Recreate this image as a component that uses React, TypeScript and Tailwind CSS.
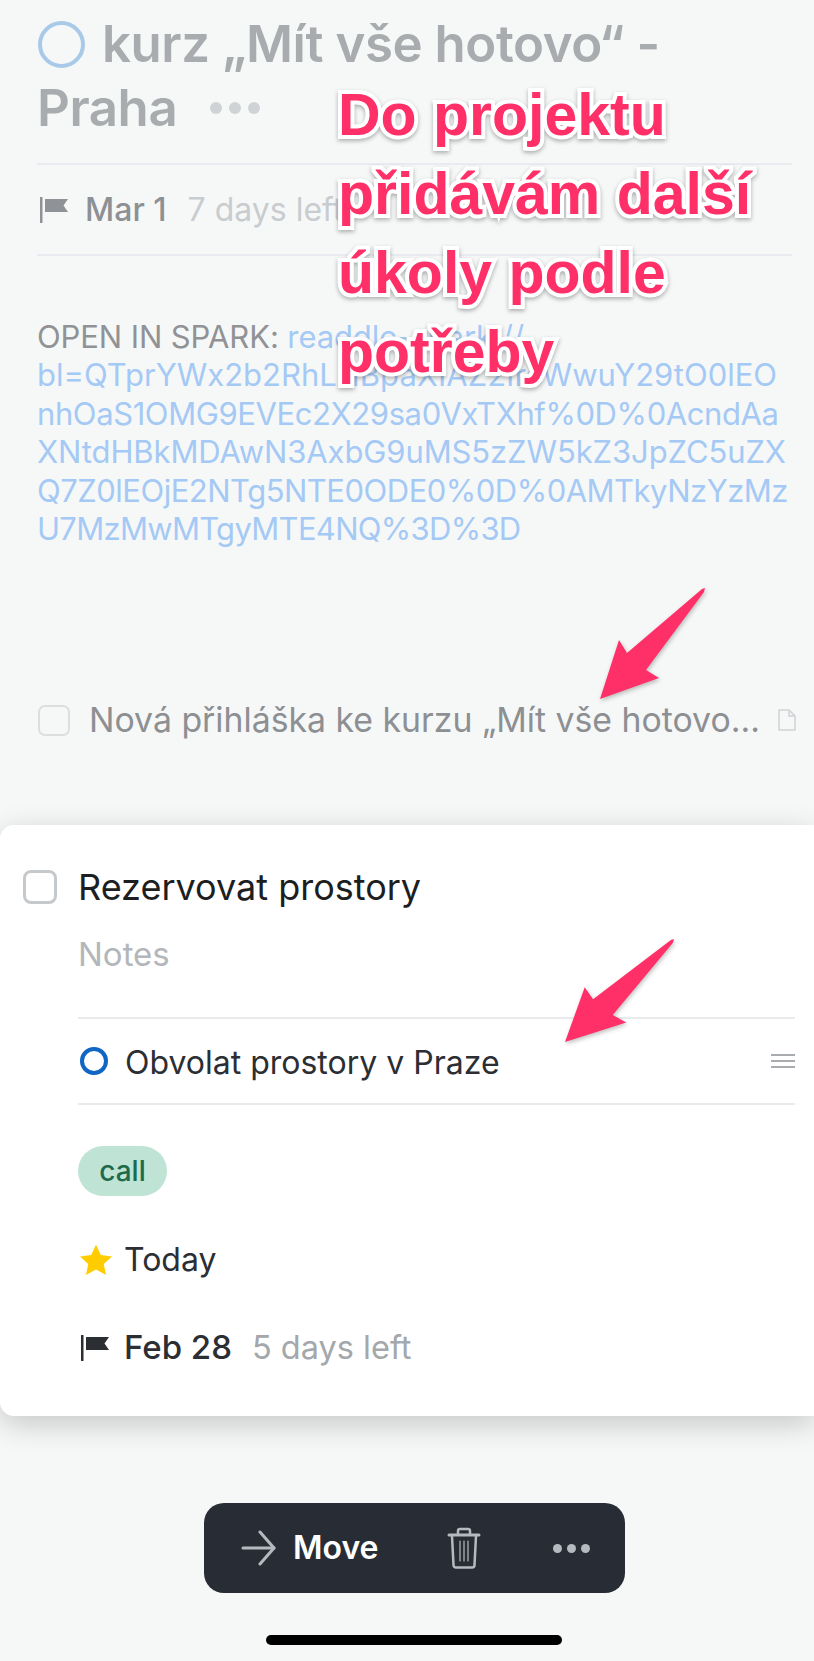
const linkLines = [
  { text: 'bl=QTprYWx2b2RhLHBpaXIAZ2IrcWwuY29tO0lEO', tracking: 'tracking-[0px]' },
  { text: 'nhOaS1OMG9EVEc2X29sa0VxTXhf%0D%0AcndAa', tracking: 'tracking-[-0.4px]' },
  { text: 'XNtdHBkMDAwN3AxbG9uMS5zZW5kZ3JpZC5uZX', tracking: 'tracking-[-0.1px]' },
  { text: 'Q7Z0lEOjE2NTg5NTE0ODE0%0D%0AMTkyNzYzMz', tracking: 'tracking-[-0.5px]' },
  { text: 'U7MzMwMTgyMTE4NQ%3D%3D', tracking: 'tracking-[-0.7px]' },
]

const annotationLines = ['Do projektu', 'přidávám další', 'úkoly podle', 'potřeby']

const Flag = ({ className }: { className: string }) => (
  <svg width="28" height="26" viewBox="0 0 28 26" className={className} fill="currentColor">
    <rect x="0" y="0" width="2.5" height="26" />
    <path d="M5 2h23l-4.5 6.5L28 15H5z" />
  </svg>
)

const Dots = ({ className }: { className: string }) => (
  <div className={`flex items-center gap-[5px] ${className}`}>
    {[0, 1, 2].map((i) => (
      <div key={i} className="w-[9px] h-[9px] rounded-full bg-current" />
    ))}
  </div>
)

const Arrow = ({ className }: { className: string }) => (
  <svg
    viewBox="0 0 105 111"
    preserveAspectRatio="none"
    className={`absolute drop-shadow-[1px_2px_2px_rgba(0,0,0,0.25)] ${className}`}
  >
    <path d="M105 0 L104 4 L46 82 L59 90 L0 111 L19 52 L27 65 L102 1 Z" fill="#ff2f68" />
  </svg>
)

export default function App() {
  return (
    <div className="relative w-[814px] h-[1661px] overflow-hidden bg-[#f6f8f8] font-['Inter','Noto_Sans',sans-serif]">
      {/* Dimmed project behind the card */}
      <div className="h-[825px] pl-[37px] pr-[22px] pt-[12px]">
        <div className="flex items-center h-16 text-[51px] font-semibold text-[#a9acae] tracking-[-0.45px] whitespace-nowrap">
          <div className="w-[47px] h-[47px] rounded-full border-[4px] border-[#a9c9e8] ml-[1px] mr-[17px]" />
          kurz „Mít vše hotovo“ -
        </div>
        <div className="flex items-center h-16 text-[51px] font-semibold text-[#a9acae] tracking-[-0.45px]">
          Praha
          <Dots className="ml-[33px] text-[#d0d3d6] [&>div]:w-[12px] [&>div]:h-[12px] gap-[7px]" />
        </div>

        <div className="mt-[23px] h-[2px] bg-[#e8ebef]" />
        <div className="flex items-center h-[89px] text-[32px] whitespace-nowrap">
          <Flag className="ml-[3px] mr-[17px] text-[#8f9296]" />
          <span className="font-medium text-[#8d9094]">Mar 1</span>
          <span className="ml-[21px] text-[#c9cccf]">7 days left</span>
        </div>
        <div className="h-[2px] bg-[#e8ebef]" />

        <div className="mt-[62px] text-[31px] leading-[38.4px] text-[#a5c9f5] whitespace-nowrap tracking-[-0.1px]">
          <div>
            <span className="text-[#909295]">OPEN IN SPARK: </span>readdle-spark://
          </div>
          {linkLines.map((line) => (
            <div key={line.text} className={line.tracking}>{line.text}</div>
          ))}
        </div>

        <div className="mt-[157px] flex items-center h-[30px]">
          <div className="w-[32px] h-[31px] rounded-[7px] border-[2.5px] border-[#dcdee0] ml-[1px] mr-[19px] shrink-0" />
          <span className="text-[33.8px] text-[#8d8f92] whitespace-nowrap">Nová přihláška ke kurzu „Mít vše hotovo...</span>
          <svg width="18" height="22" viewBox="0 0 18 22" fill="none" stroke="#cfd2d5" strokeWidth="1.5" className="absolute left-[778px]">
            <path d="M1 1h10l6 6v14H1z" />
            <path d="M11 1v6h6" />
          </svg>
        </div>
      </div>

      {/* Task card */}
      <div className="h-[591px] ml-0 rounded-l-[14px] bg-white shadow-[0_8px_30px_rgba(0,0,0,0.2)] pl-[23px] pr-[19px] pt-[44px]">
        <div className="flex items-center h-[36px]">
          <div className="w-[34px] h-[34px] rounded-[8px] border-[3px] border-[#c6c9cc] mr-[21px] shrink-0" />
          <span className="text-[36px] text-[#1c1e21]">Rezervovat prostory</span>
        </div>

        <div className="ml-[55px]">
          <div className="mt-[31px] text-[33px] leading-[36px] text-[#b3b6ba]">Notes</div>
          <div className="mt-[45px] h-[2px] bg-[#e9eaec]" />
          <div className="flex items-center h-[84px]">
            <div className="w-[28px] h-[28px] rounded-full border-[4px] border-[#0f66c4] ml-[2px] mr-[17px] shrink-0" />
            <span className="pt-[3px] text-[32px] text-[#2b2e33]">Obvolat prostory v Praze</span>
            <div className="ml-auto w-[24px] flex flex-col gap-[4px]">
              <div className="h-[2px] bg-[#a8abaf]" />
              <div className="h-[2px] bg-[#a8abaf]" />
              <div className="h-[2px] bg-[#a8abaf]" />
            </div>
          </div>
          <div className="h-[2px] bg-[#e9eaec]" />

          <div className="mt-[41px] flex items-center justify-center w-[89px] h-[50px] rounded-[25px] bg-[#bfe3d4] text-[28px] font-medium text-[#1d6b4a]">
            call
          </div>

          <div className="mt-[44px] flex items-center h-[40px]">
            <svg width="34" height="32" viewBox="0 0 24 23" className="ml-[1px] mr-[11px]" fill="#ffcc00">
              <path d="M12 0.5l3.5 7.4 8 1-5.9 5.4 1.6 8-7.2-4-7.2 4 1.6-8L.5 8.9l8-1z" />
            </svg>
            <span className="text-[32px] text-[#2b2e33]">Today</span>
          </div>

          <div className="mt-[48px] flex items-center h-[40px] whitespace-nowrap">
            <Flag className="ml-[3px] mr-[15px] text-[#2b2e33]" />
            <span className="text-[33px] font-medium text-[#2b2e33]">Feb 28</span>
            <span className="ml-[20px] text-[32.5px] text-[#a4a7ab]">5 days left</span>
          </div>
        </div>
      </div>

      {/* Bottom toolbar */}
      <div className="mt-[87px] ml-[204px] w-[421px] h-[90px] rounded-[20px] bg-[#282d35] flex items-center pl-[37px]">
        <svg width="36" height="36" viewBox="0 0 36 36" fill="none" stroke="#b6bac0" strokeWidth="3" strokeLinecap="round" strokeLinejoin="round">
          <path d="M2 18h31" />
          <path d="M19 2l14 16-14 16" />
        </svg>
        <span className="ml-[16px] text-[32px] font-semibold text-white">Move</span>
        <svg width="34" height="42" viewBox="0 0 34 42" fill="none" stroke="#b6bac0" strokeWidth="2.5" className="ml-[68px]" strokeLinecap="round">
          <path d="M2 8h30" strokeWidth="3" />
          <path d="M11 7V4a2 2 0 0 1 2-2h8a2 2 0 0 1 2 2v3" />
          <path d="M5 9l1.5 29a2.5 2.5 0 0 0 2.5 2.5h16a2.5 2.5 0 0 0 2.5-2.5L29 9" />
          <path d="M13 14v20M17 14v20M21 14v20" strokeWidth="1.2" />
        </svg>
        <Dots className="ml-[72px] text-[#b6bac0]" />
      </div>

      <div className="mt-[42px] ml-[266px] w-[296px] h-[10px] rounded-full bg-black" />

      {/* Annotations laid over the screenshot */}
      <Arrow className="left-[600px] top-[588px] w-[105px] h-[111px]" />
      <Arrow className="left-[565px] top-[939px] w-[109px] h-[103px]" />
      <div className="absolute left-[338px] top-[76px] text-[59px] leading-[79px] font-bold font-['Liberation_Sans',sans-serif] text-[#ff2f68] whitespace-nowrap [-webkit-text-stroke:8px_white] [paint-order:stroke_fill] drop-shadow-[0_2px_2px_rgba(0,0,0,0.3)]">
        {annotationLines.map((line) => (
          <div key={line}>{line}</div>
        ))}
      </div>
    </div>
  )
}
